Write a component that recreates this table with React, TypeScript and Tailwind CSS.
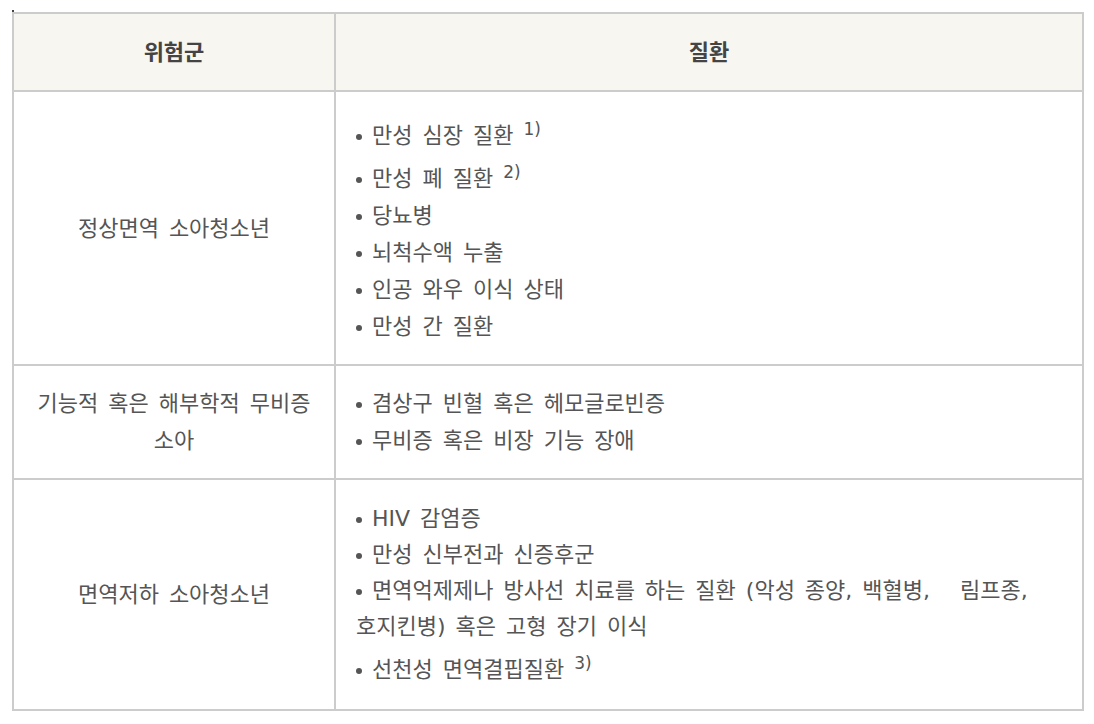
import React from 'react';

type Row = {
  group: string;
  items: { text: string; note?: string }[];
  height: string;
  leading: string;
};

const rows: Row[] = [
  {
    group: '정상면역 소아청소년',
    height: 'h-[274px]',
    leading: 'leading-[37px]',
    items: [
      { text: '만성 심장 질환', note: '1)' },
      { text: '만성 폐 질환', note: '2)' },
      { text: '당뇨병' },
      { text: '뇌척수액 누출' },
      { text: '인공 와우 이식 상태' },
      { text: '만성 간 질환' },
    ],
  },
  {
    group: '기능적 혹은 해부학적 무비증 소아',
    height: 'h-[114px]',
    leading: 'leading-[37px]',
    items: [{ text: '겸상구 빈혈 혹은 헤모글로빈증' }, { text: '무비증 혹은 비장 기능 장애' }],
  },
  {
    group: '면역저하 소아청소년',
    height: 'h-[231px]',
    leading: 'leading-[36px]',
    items: [
      { text: 'HIV 감염증' },
      { text: '만성 신부전과 신증후군' },
      { text: '면역억제제나 방사선 치료를 하는 질환 (악성 종양, 백혈병,\u00a0\u00a0 림프종, 호지킨병) 혹은 고형 장기 이식' },
      { text: '선천성 면역결핍질환', note: '3)' },
    ],
  },
];

const Bullet = () => <span className="inline-block h-[6px] w-[6px] rounded-full bg-[#555] align-middle" />;

export default function App() {
  return (
    <div
      className="min-h-screen bg-white pt-[10px] text-[22px] break-keep [word-spacing:3px]"
      style={{ fontFamily: '"DejaVu Sans", "Noto Sans CJK KR", sans-serif' }}
    >
      <div className="ml-[12px] h-[2px] w-[2px] bg-[#444]" />
      <table className="ml-[12px] w-[1072px] table-fixed border-collapse">
        <colgroup>
          <col className="w-[322px]" />
          <col />
        </colgroup>
        <thead>
          <tr>
            <th className="h-[78px] border-2 border-[#cccccc] bg-[#f7f6f0] text-center align-middle font-bold text-[#444]">
              위험군
            </th>
            <th className="h-[78px] border-2 border-[#cccccc] bg-[#f7f6f0] text-center align-middle font-bold text-[#444]">
              질환
            </th>
          </tr>
        </thead>
        <tbody>
          {rows.map((row) => (
            <tr key={row.group}>
              <td className={`${row.height} border-2 border-[#cccccc] px-[20px] text-center align-middle leading-[37px] text-[#555]`}>
                {row.group}
              </td>
              <td className={`${row.height} border-2 border-[#cccccc] px-[20px] align-middle text-[#555]`}>
                {row.items.map((item) => (
                  <p key={item.text} className={row.leading}>
                    <Bullet /> {item.text}
                    {item.note && (
                      <>
                        {' '}
                        <span className="align-super text-[17px]">{item.note}</span>
                      </>
                    )}
                  </p>
                ))}
              </td>
            </tr>
          ))}
        </tbody>
      </table>
    </div>
  );
}
